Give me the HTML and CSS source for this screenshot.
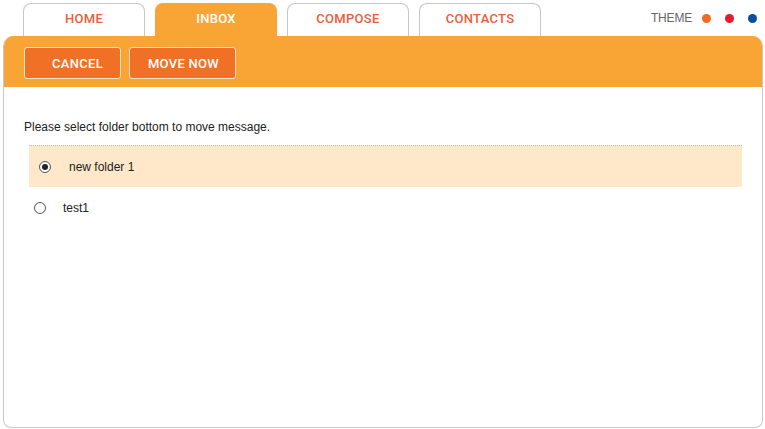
FILE: index.html
```html
<!DOCTYPE html>
<html lang="en">

<head>
    <meta charset="UTF-8" />
    <title>Move message</title>
    <link rel="stylesheet" href="styles.css">
</head>

<body>
    <div class="top">
        <ul class="tabs">
            <li><a href="javascript:">HOME</a></li>
            <li class="active"><a href="javascript:">INBOX</a></li>
            <li><a href="javascript:">COMPOSE</a></li>
            <li><a href="javascript:">CONTACTS</a></li>
        </ul>
        <div class="theme">
            THEME
            <span class="dot orange"></span>
            <span class="dot red"></span>
            <span class="dot blue"></span>
        </div>
    </div>

    <div class="panel">
        <div class="toolbar">
            <button class="btn cancel">CANCEL</button>
            <button class="btn move">MOVE NOW</button>
        </div>
        <div class="body">
            <p class="hint">Please select folder bottom to move message.</p>
            <ul class="folders">
                <li class="folder selected">
                    <span class="radio"></span>new folder 1
                </li>
                <li class="folder">
                    <span class="radio"></span>test1
                </li>
            </ul>
        </div>
    </div>
</body>

</html>
```

FILE: styles.css
```css
* {
    margin: 0;
    padding: 0;
    box-sizing: border-box;
}

body {
    width: 765px;
    height: 429px;
    padding: 3px 2px 1px 3px;
    font-family: Arial, "Liberation Sans", sans-serif;
    font-size: 12px;
    color: #222;
    background: #fff;
    display: flex;
    flex-direction: column;
}

ul {
    list-style: none;
}

a {
    text-decoration: none;
}

.top {
    display: flex;
    align-items: flex-start;
    justify-content: space-between;
    height: 33px;
}

.tabs {
    display: flex;
    gap: 10px;
    padding-left: 20px;
}

.tabs li a {
    display: block;
    width: 122px;
    height: 33px;
    line-height: 30px;
    text-align: center;
    border: 1px solid #c8c8c8;
    border-bottom: 0;
    border-radius: 8px 8px 0 0;
    color: #e9603a;
    font-family: Roboto, sans-serif;
    font-weight: 500;
    font-size: 13px;
    letter-spacing: 0.3px;
}

.tabs li.active a {
    background: #f8a535;
    border-color: #f8a535;
    color: #fff;
}

.theme {
    display: flex;
    align-items: center;
    height: 30px;
    padding-right: 6px;
    color: #666;
    font-size: 12px;
    letter-spacing: -0.2px;
}

.dot {
    width: 9px;
    height: 9px;
    border-radius: 50%;
    margin-left: 14px;
}

.orange {
    margin-left: 10px;
    background: #f26a25;
}

.red {
    background: #e8192c;
}

.blue {
    background: #0a4ea2;
}

.panel {
    flex: 1;
    display: flex;
    flex-direction: column;
    border: 1px solid #c8c8c8;
    border-top: 0;
    border-radius: 10px 10px 8px 8px;
    overflow: hidden;
}

.toolbar {
    display: flex;
    gap: 8px;
    height: 51px;
    padding: 11px 0 0 20px;
    background: #f8a535;
}

.btn {
    height: 32px;
    background: #f07125;
    border: 1px solid #fde3c6;
    border-radius: 3px;
    color: #fff;
    font-family: Roboto, sans-serif;
    font-weight: 500;
    font-size: 13px;
    letter-spacing: 0.3px;
}

.cancel {
    width: 97px;
    padding-left: 10px;
}

.move {
    width: 107px;
    padding-left: 2px;
}

.body {
    padding: 33px 20px 0 20px;
}

.hint {
    margin-bottom: 11px;
}

.folder {
    display: flex;
    align-items: center;
    height: 42px;
    padding-left: 10px;
}

.folder.selected {
    margin-left: 5px;
    padding-left: 10px;
    background: #fee8c9;
    border-top: 1px dotted #bbb;
}

.radio {
    position: relative;
    width: 12px;
    height: 12px;
    margin-right: 18px;
    border: 1px solid #555;
    border-radius: 50%;
    background: #fff;
}

.selected .radio::after {
    content: "";
    position: absolute;
    left: 2px;
    top: 2px;
    width: 6px;
    height: 6px;
    border-radius: 50%;
    background: #222;
}

.folder:not(.selected) .radio {
    margin-right: 17px;
}
```
